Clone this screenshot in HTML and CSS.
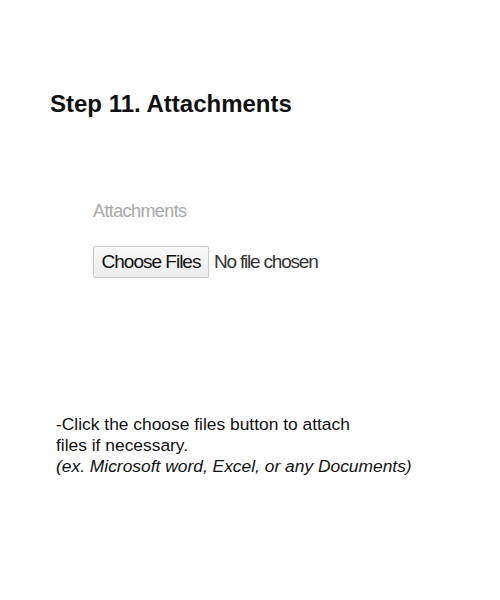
FILE: index.html
```html
<!DOCTYPE html>
<html>
<head>
<meta charset="utf-8">
<link rel="stylesheet" href="styles.css">
</head>
<body>
<div class="page">
  <h1 class="title">Step 11. Attachments</h1>
  <div class="field">
    <div class="label">Attachments</div>
    <div class="file-row">
      <span class="btn">Choose Files</span>
      <span class="status">No file chosen</span>
    </div>
  </div>
  <div class="note">
    <p class="line">-Click the choose files button to attach</p>
    <p class="line">files if necessary.</p>
    <p class="line em">(ex. Microsoft word, Excel, or any Documents)</p>
  </div>
</div>
</body>
</html>
```

FILE: styles.css
```css
html, body {
  margin: 0;
  padding: 0;
  background: #fff;
}
.page {
  width: 500px;
  height: 600px;
  font-family: "Liberation Sans", Arial, sans-serif;
  color: #111;
  display: flex;
  flex-direction: column;
}
.title {
  margin: 90px 0 0 50px;
  font-size: 24px;
  font-weight: bold;
  line-height: 28px;
}
.field {
  margin: 81px 0 0 93px;
  display: flex;
  flex-direction: column;
}
.label {
  font-size: 18px;
  color: #a8a8a8;
  letter-spacing: -0.6px;
  line-height: 24px;
}
.file-row {
  margin-top: 23px;
  display: flex;
  align-items: center;
  gap: 5px;
}
.btn {
  box-sizing: border-box;
  width: 116px;
  height: 32px;
  border: 1px solid #c8c8c8;
  border-radius: 2px;
  background: linear-gradient(#f9f9f9, #ececec);
  font-size: 19px;
  letter-spacing: -1px;
  color: #111;
  display: flex;
  align-items: center;
  justify-content: center;
}
.status {
  font-size: 19px;
  letter-spacing: -1.2px;
  color: #333;
}
.note {
  margin: 136px 0 0 56px;
}
.line {
  margin: 0;
  font-size: 17.4px;
  line-height: 21px;
  color: #111;
}
.em {
  font-style: italic;
}
```
